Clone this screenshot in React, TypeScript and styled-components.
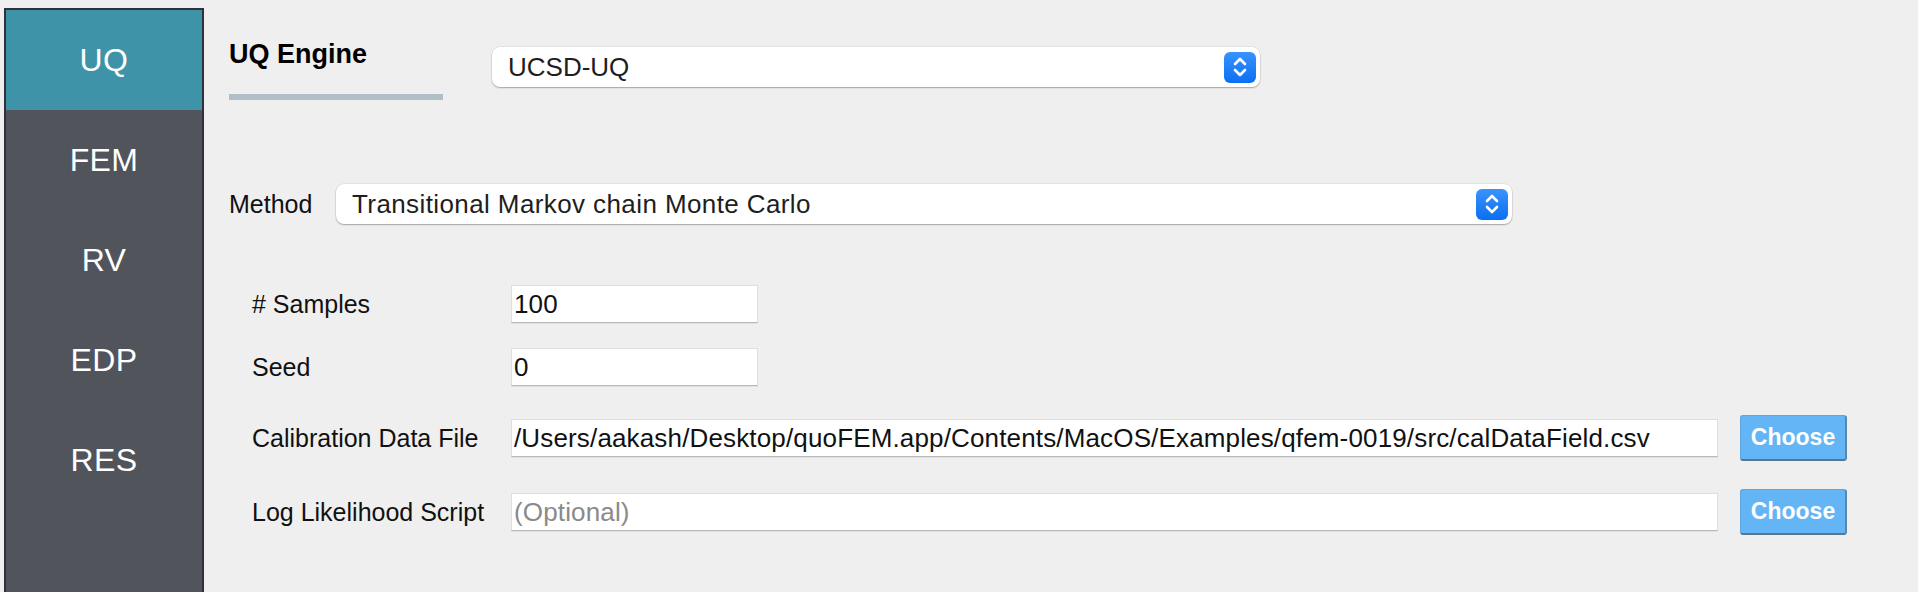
import React from "react";
import styled, { createGlobalStyle } from "styled-components";

const GlobalStyle = createGlobalStyle`
  html, body {
    margin: 0;
    padding: 0;
    background: #efefef;
    font-family: "Liberation Sans", Arial, Helvetica, sans-serif;
    color: #111;
  }
  * { box-sizing: border-box; }
`;

const Page = styled.div`
  display: flex;
  align-items: stretch;
  min-height: 100vh;
  padding: 8px 0 0 4px;
  background: #efefef;
`;

const Sidebar = styled.nav`
  width: 200px;
  flex: 0 0 200px;
  display: flex;
  flex-direction: column;
  background: #51545b;
  border-left: 2px solid #2f3237;
  border-right: 2px solid #2f3237;
  border-top: 2px solid #2f3237;
`;

const NavItem = styled.div<{ $active?: boolean }>`
  height: 100px;
  display: flex;
  align-items: center;
  justify-content: center;
  background: ${(p) => (p.$active ? "#3f93a8" : "transparent")};
  color: #fff;
  font-size: 32px;
  letter-spacing: 0.4px;
`;

const Main = styled.main`
  flex: 1;
  display: flex;
  flex-direction: column;
  padding: 31px 0 0 25px;
`;

const HeaderRow = styled.div`
  display: flex;
  align-items: flex-start;
`;

const TabTitle = styled.div`
  width: 214px;
  display: flex;
  flex-direction: column;
`;

const TitleText = styled.div`
  font-size: 27px;
  line-height: 31px;
  font-weight: 700;
  color: #000;
`;

const TitleBar = styled.div`
  margin-top: 24px;
  height: 6px;
  background: #b0bec5;
`;

const Select = styled.div<{ $width: number }>`
  width: ${(p) => p.$width}px;
  height: 40px;
  background: #fff;
  border-radius: 8px;
  box-shadow: 0 0 0 0.5px rgba(0, 0, 0, 0.1), 0 1px 1.5px rgba(0, 0, 0, 0.28);
  display: flex;
  align-items: center;
  padding: 0 4px 0 16px;
`;

const SelectText = styled.span<{ $size: number; $spacing?: number }>`
  flex: 1;
  font-size: ${(p) => p.$size}px;
  letter-spacing: ${(p) => p.$spacing ?? 0}px;
  color: #1e1e1e;
  white-space: nowrap;
`;

const Stepper = styled.span`
  width: 32px;
  height: 31px;
  border-radius: 6px;
  background: linear-gradient(#3a93fc, #0a6ff2);
  display: flex;
  align-items: center;
  justify-content: center;
`;

const EngineSelectWrap = styled.div`
  margin: 8px 0 0 49px;
`;

const MethodRow = styled.div`
  margin-top: 84px;
  display: flex;
  align-items: center;
`;

const MethodLabel = styled.div`
  width: 107px;
  font-size: 25px;
  color: #111;
`;

const Form = styled.div`
  margin: 0 0 0 23px;
  display: flex;
  flex-direction: column;
`;

const FieldRow = styled.div<{ $top: number }>`
  margin-top: ${(p) => p.$top}px;
  display: flex;
  align-items: center;
`;

const FieldLabel = styled.label`
  width: 259px;
  font-size: 25px;
  color: #111;
  white-space: nowrap;
`;

const TextInput = styled.div<{ $width: number; $placeholder?: boolean }>`
  width: ${(p) => p.$width}px;
  height: 38px;
  background: #fff;
  border: 1px solid #dedede;
  border-bottom: 1px solid #b9b9b9;
  box-shadow: 0 1px 0 rgba(0, 0, 0, 0.06);
  display: flex;
  align-items: center;
  padding: 0 2px;
  font-size: 26px;
  letter-spacing: 0.15px;
  color: ${(p) => (p.$placeholder ? "#8a8a8a" : "#111")};
  white-space: nowrap;
  overflow: hidden;
`;

const ChooseButton = styled.button`
  margin-left: 22px;
  width: 107px;
  height: 46px;
  background: #64b5f6;
  border: 1px solid #5ea6df;
  border-bottom: 2px solid #56778f;
  border-right: 2px solid #5b86a6;
  border-radius: 3px;
  color: #fff;
  font-family: "Liberation Sans", Arial, sans-serif;
  font-weight: 700;
  font-size: 23px;
  padding: 0;
  display: flex;
  align-items: center;
  justify-content: center;
`;

const StepperIcon = () => (
  <svg width="16" height="22" viewBox="0 0 16 22" fill="none">
    <path d="M3 8 L8 3 L13 8" stroke="#fff" strokeWidth="2.6" strokeLinecap="round" strokeLinejoin="round" />
    <path d="M3 14 L8 19 L13 14" stroke="#fff" strokeWidth="2.6" strokeLinecap="round" strokeLinejoin="round" />
  </svg>
);

const navItems = ["UQ", "FEM", "RV", "EDP", "RES"];

export default function App() {
  return (
    <>
      <GlobalStyle />
      <Page>
        <Sidebar>
          {navItems.map((n, i) => (
            <NavItem key={n} $active={i === 0}>
              {n}
            </NavItem>
          ))}
        </Sidebar>
        <Main>
          <HeaderRow>
            <TabTitle>
              <TitleText>UQ Engine</TitleText>
              <TitleBar />
            </TabTitle>
            <EngineSelectWrap>
              <Select $width={768}>
                <SelectText $size={26}>UCSD-UQ</SelectText>
                <Stepper>
                  <StepperIcon />
                </Stepper>
              </Select>
            </EngineSelectWrap>
          </HeaderRow>

          <MethodRow>
            <MethodLabel>Method</MethodLabel>
            <Select $width={1176}>
              <SelectText $size={26} $spacing={0.4}>
                Transitional Markov chain Monte Carlo
              </SelectText>
              <Stepper>
                <StepperIcon />
              </Stepper>
            </Select>
          </MethodRow>

          <Form>
            <FieldRow $top={61}>
              <FieldLabel># Samples</FieldLabel>
              <TextInput $width={247}>100</TextInput>
            </FieldRow>
            <FieldRow $top={25}>
              <FieldLabel>Seed</FieldLabel>
              <TextInput $width={247}>0</TextInput>
            </FieldRow>
            <FieldRow $top={29}>
              <FieldLabel>Calibration Data File</FieldLabel>
              <TextInput $width={1207}>
                /Users/aakash/Desktop/quoFEM.app/Contents/MacOS/Examples/qfem-0019/src/calDataField.csv
              </TextInput>
              <ChooseButton>Choose</ChooseButton>
            </FieldRow>
            <FieldRow $top={28}>
              <FieldLabel>Log Likelihood Script</FieldLabel>
              <TextInput $width={1207} $placeholder>
                (Optional)
              </TextInput>
              <ChooseButton>Choose</ChooseButton>
            </FieldRow>
          </Form>
        </Main>
      </Page>
    </>
  );
}
